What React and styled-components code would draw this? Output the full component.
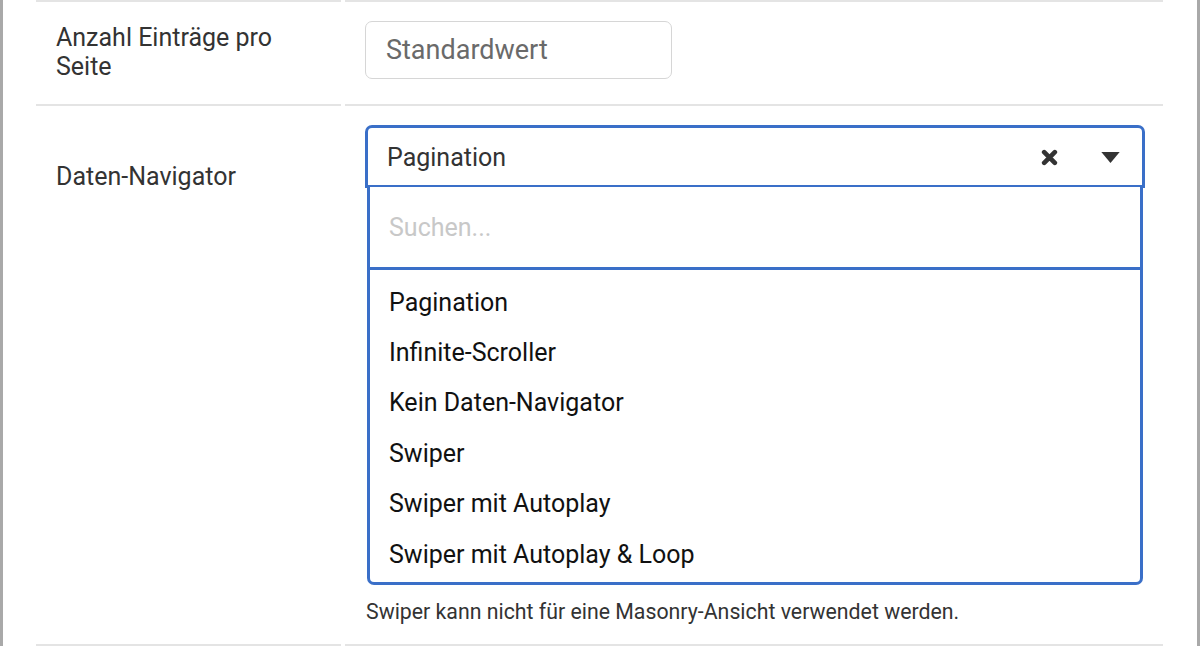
import React from 'react';
import styled, { createGlobalStyle } from 'styled-components';

const GlobalStyle = createGlobalStyle`
  html, body {
    margin: 0;
    padding: 0;
    background: #fff;
  }
  body {
    font-family: Roboto, "Liberation Sans", Arial, sans-serif;
    color: #333;
  }
  * { box-sizing: border-box; }
`;

const options = [
  'Pagination',
  'Infinite-Scroller',
  'Kein Daten-Navigator',
  'Swiper',
  'Swiper mit Autoplay',
  'Swiper mit Autoplay & Loop',
];

const App = () => {
  return (
    <>
      <GlobalStyle />
      <Page>
        <FormTable>
          <LabelCell $top={21}>
            <Label>Anzahl Einträge pro Seite</Label>
          </LabelCell>
          <ValueCell $bottom={25}>
            <TextInput placeholder="Standardwert" />
          </ValueCell>

          <LabelCell $top={56}>
            <Label>Daten-Navigator</Label>
          </LabelCell>
          <ValueCell $bottom={19}>
            <SelectBox>
              <SelectValue>Pagination</SelectValue>
              <ClearIcon viewBox="0 0 16 16" aria-hidden="true">
                <path
                  d="M3 3 13 13M13 3 3 13"
                  stroke="#333"
                  strokeWidth="4.4"
                  strokeLinecap="round"
                />
              </ClearIcon>
              <Caret viewBox="0 0 20 12" aria-hidden="true">
                <path d="M0 0H20L10 12Z" fill="#333" />
              </Caret>
            </SelectBox>
            <Dropdown>
              <SearchField placeholder="Suchen..." />
              <OptionList>
                {options.map((o) => (
                  <Option key={o}>{o}</Option>
                ))}
              </OptionList>
            </Dropdown>
            <HelpText>Swiper kann nicht für eine Masonry-Ansicht verwendet werden.</HelpText>
          </ValueCell>

          <LabelCell $top={0} />
          <ValueCell $bottom={0} />
        </FormTable>
      </Page>
    </>
  );
};

export default App;

const Page = styled.div`
  height: 646px;
  overflow: hidden;
  border-left: 3px solid #a9a9a9;
  border-right: 3px solid #a9a9a9;
  padding: 0 34px 0 33px;
`;

const FormTable = styled.div`
  display: grid;
  grid-template-columns: 305px 818px;
  column-gap: 4px;
`;

const LabelCell = styled.div`
  border-top: 2px solid #e4e4e4;
  padding: ${(p) => p.$top}px 20px 0 20px;
`;

const Label = styled.div`
  font-size: 25px;
  line-height: 29px;
  color: #333;
  max-width: 240px;
`;

const ValueCell = styled.div`
  border-top: 2px solid #e4e4e4;
  padding: 19px 20px ${(p) => p.$bottom}px 20px;
`;

const TextInput = styled.input`
  display: block;
  width: 307px;
  height: 58px;
  border: 1.5px solid #d6d6d6;
  border-radius: 7px;
  padding: 0 20px;
  font-family: Roboto, "Liberation Sans", Arial, sans-serif;
  font-size: 27px;
  color: #333;
  outline: none;
  &::placeholder {
    color: #6a6a6a;
  }
`;

const SelectBox = styled.div`
  display: flex;
  align-items: center;
  height: 63px;
  width: 780px;
  border: 3px solid #3a6fc8;
  border-radius: 7px 7px 0 0;
  padding: 2px 22px 0 19px;
`;

const SelectValue = styled.span`
  flex: 1;
  font-size: 25px;
  color: #333;
`;

const ClearIcon = styled.svg`
  width: 17px;
  height: 17px;
  margin-right: 43px;
`;

const Caret = styled.svg`
  width: 19px;
  height: 11px;
`;

const Dropdown = styled.div`
  width: 776px;
  margin: -1px 0 0 2px;
  border: 3px solid #3a6fc8;
  border-top: none;
  border-radius: 0 0 7px 7px;
  background: #fff;
`;

const SearchField = styled.input`
  display: block;
  width: 100%;
  height: 83px;
  border: none;
  border-bottom: 3px solid #3a6fc8;
  padding: 0 19px;
  font-family: Roboto, "Liberation Sans", Arial, sans-serif;
  font-size: 25px;
  outline: none;
  &::placeholder {
    color: #c8c8c8;
  }
`;

const OptionList = styled.ul`
  list-style: none;
  margin: 0;
  padding: 7px 0 3px;
`;

const Option = styled.li`
  height: 50.4px;
  display: flex;
  align-items: center;
  padding: 0 19px;
  font-size: 25px;
  color: #111;
`;

const HelpText = styled.p`
  margin: 14px 0 0 1px;
  font-size: 21.3px;
  line-height: 26px;
  color: #333;
`;
